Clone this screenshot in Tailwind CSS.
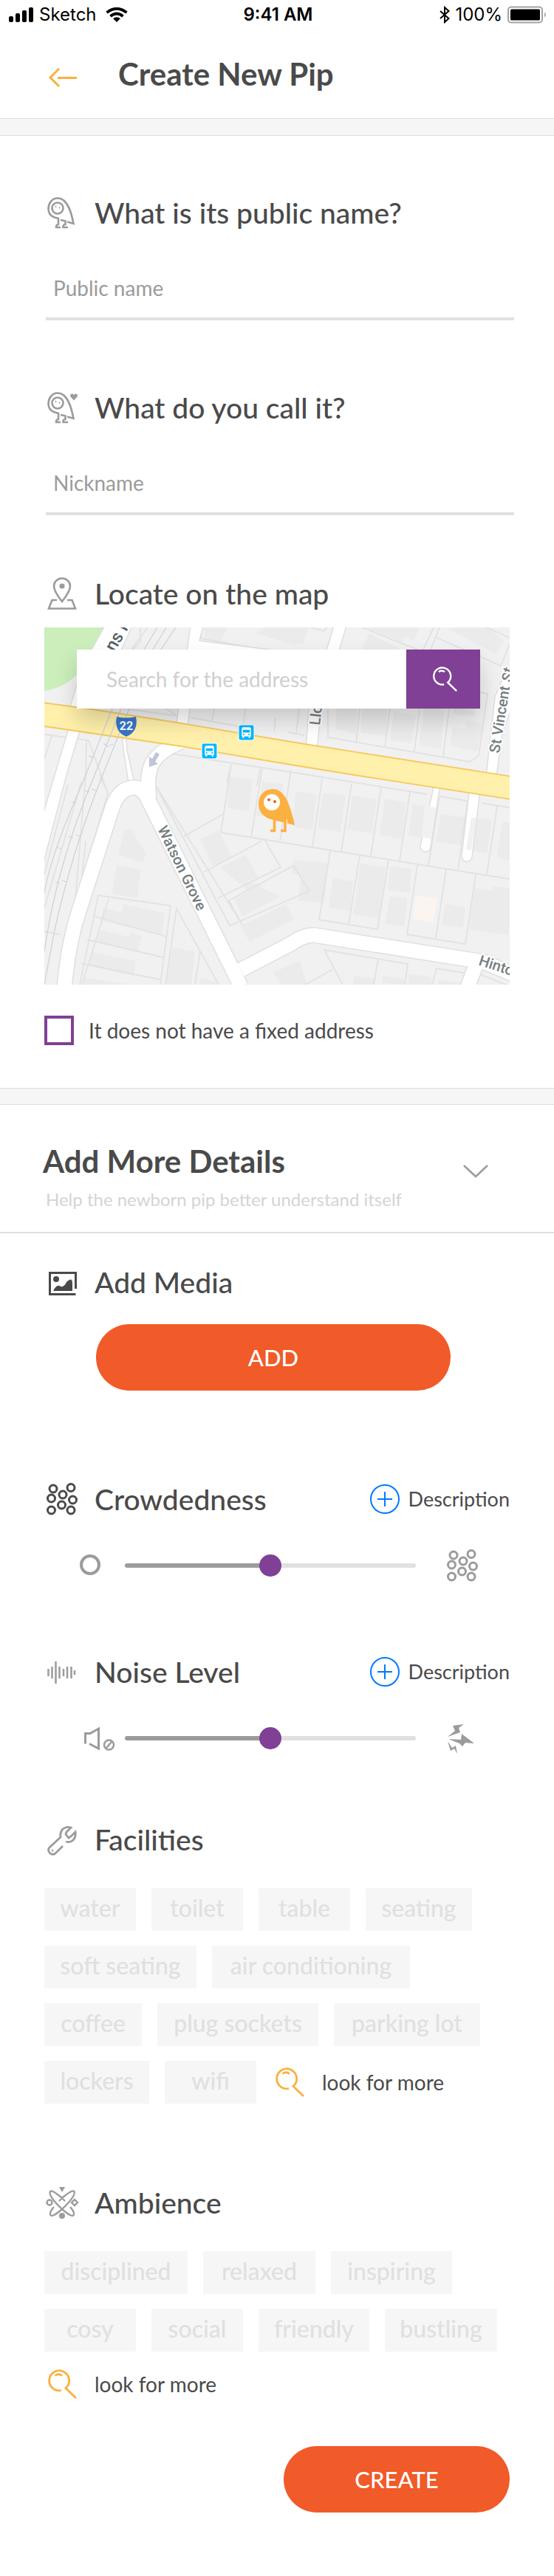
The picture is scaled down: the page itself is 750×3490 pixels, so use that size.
<!DOCTYPE html>
<html lang="en">
<head>
<meta charset="utf-8">
<meta name="viewport" content="width=device-width, initial-scale=1">
<title>Create New Pip</title>
<script src="https://cdn.jsdelivr.net/npm/@tailwindcss/browser@4"></script>
</head>
<body class="bg-white font-[Lato,'Open_Sans',sans-serif] text-[#4a4a4a]">

<!-- Shared icon shapes -->
<svg class="hidden" aria-hidden="true">
  <symbol id="pip" viewBox="0 0 48 44">
    <g fill="none" stroke="currentColor" stroke-width="2.600">
      <path d="M31 34.500L39.500 37C37 24 32 2.500 18 2.500C10 2.500 5.500 10 5.500 17C5.500 24 9.500 27 14 28.500L19 30V38Q16 38 16 42H22"/>
      <path d="M22 32L28.500 33.500V38Q25 38 25.500 42H32"/>
      <circle cx="18" cy="16" r="7.500"/>
    </g>
    <circle cx="15.500" cy="14" r="1" fill="currentColor"/><circle cx="20.500" cy="15.500" r="1" fill="currentColor"/>
  </symbol>
  <symbol id="crowd" viewBox="0 0 44 44">
    <g fill="none" stroke="currentColor" stroke-width="3">
      <circle cx="10" cy="8" r="5"/><circle cx="34" cy="6.500" r="5"/><circle cx="23" cy="16" r="5"/><circle cx="7.500" cy="21" r="5"/>
      <circle cx="36.500" cy="23" r="5"/><circle cx="21.500" cy="30" r="5"/><circle cx="7.500" cy="37" r="5"/><circle cx="34" cy="37" r="5"/>
    </g>
  </symbol>
  <symbol id="search" viewBox="0 0 40 40">
    <g fill="none" stroke="currentColor" stroke-width="2.800">
      <path d="M19 28.500A13.500 13.500 0 1 1 25 25.500L39 39"/>
      <path d="M10.500 8.500Q15 5 20 8.500"/>
    </g>
  </symbol>
  <symbol id="plus" viewBox="0 0 40 40">
    <g fill="none" stroke="currentColor" stroke-width="2"><circle cx="20" cy="20" r="19"/><path d="M20 10V30M10 20H30"/></g>
  </symbol>
  <symbol id="bus" viewBox="0 0 22 22">
    <rect x="0.500" y="0.500" width="21" height="21" rx="3" fill="#fff"/><rect x="1.500" y="1.500" width="19" height="19" rx="2" fill="#00b8ff"/>
    <path d="M5 6Q5 4 7 4H15Q17 4 17 6V16H16V18H14V16H8V18H6V16H5Z" fill="#fff"/>
    <path d="M6.500 7.500H15.500V11H6.500Z" fill="#00b8ff"/><circle cx="7.500" cy="13.500" r="1" fill="#00b8ff"/><circle cx="14.500" cy="13.500" r="1" fill="#00b8ff"/>
  </symbol>
</svg>

<div class="grid h-10 grid-cols-3 items-center pr-[9px] pl-3 font-[Inter,sans-serif] text-2xl leading-10 text-black">
  <div class="flex items-center gap-2">
    <svg class="h-5 w-[33px]" viewBox="0 0 33 20" aria-hidden="true"><rect y="12" width="6" height="8" rx="2"/><rect x="9" y="8" width="6" height="12" rx="2"/><rect x="18" y="4" width="6" height="16" rx="2"/><rect x="27" width="6" height="20" rx="2"/></svg>
    <span>Sketch</span>
    <svg class="ml-1 h-5 w-[30px]" viewBox="0 0 30 20" aria-hidden="true"><g fill="none" stroke="#000" stroke-width="3.800"><path d="M1.500 7Q15-3.500 28.500 7"/><path d="M6.500 12Q15 5 23.500 12"/></g><path d="M10 15Q15 11.500 20 15L15 20Z"/></svg>
  </div>
  <div class="text-center font-semibold">9:41 AM</div>
  <div class="flex items-center justify-end gap-[7px]">
    <svg class="h-6 w-[14px]" viewBox="0 0 14 24" fill="none" stroke="#000" stroke-width="2" aria-hidden="true"><path d="M1 7L12.500 17L7 22V2L12.500 7L1 17"/></svg>
    <span>100%</span>
    <svg class="h-6 w-[54px]" viewBox="0 0 54 24" aria-hidden="true"><rect x="1" y="1.500" width="46" height="21" rx="4" fill="#fff" stroke="#a3a3a3" stroke-width="2"/><rect x="4" y="4.500" width="40" height="15" rx="1.500"/><path d="M50 8.500Q54 12 50 15.500Z" fill="#a3a3a3"/></svg>
  </div>
</div>

<header class="flex h-[120px] items-center px-[60px]">
  <button type="button" aria-label="Back" class="text-[#fbb040]">
    <svg class="size-12" viewBox="0 0 48 48" fill="none" stroke="currentColor" stroke-width="3" aria-hidden="true"><path d="M20 17L8 29L20 41M18 29.500H44"/></svg>
  </button>
  <h1 class="ml-[52px] text-[42px] leading-[48px] font-bold">Create New Pip</h1>
</header>

<div class="h-6 border-y border-[#dedede] bg-[#f6f6f6]"></div>

<main>
  <section class="px-[60px] pt-[82px] pb-[58px]">
    <div class="flex h-11 items-center gap-5">
      <svg class="h-11 w-12 text-[#9b9b9b]" aria-hidden="true"><use href="#pip"/></svg>
      <label for="public" class="text-[39px] leading-11 font-medium">What is its public name?</label>
    </div>
    <input id="public" type="text" placeholder="Public name" class="mt-10 -mr-1.5 ml-0.5 block h-[84px] w-[calc(100%+4px)] border-b-4 border-[#e0e0e0] px-2.5 text-[28px] outline-none placeholder:text-[#9b9b9b]">

    <div class="mt-24 flex h-11 items-center gap-5">
      <svg class="h-11 w-12 text-[#9b9b9b]" viewBox="0 0 48 44" aria-hidden="true"><use href="#pip" width="48" height="44"/><path d="M40 12.500L35.500 7.500Q34 4 37.500 3.500Q39 3.500 40 5Q41 3.500 42.500 3.500Q46 4 44.500 7.500Z" fill="currentColor"/></svg>
      <label for="nick" class="text-[39px] leading-11 font-medium">What do you call it?</label>
    </div>
    <input id="nick" type="text" placeholder="Nickname" class="mt-10 -mr-1.5 ml-0.5 block h-[84px] w-[calc(100%+4px)] border-b-4 border-[#e0e0e0] px-2.5 text-[28px] outline-none placeholder:text-[#9b9b9b]">

    <div class="mt-[84px] flex h-11 items-center gap-5">
      <svg class="h-11 w-12 text-[#9b9b9b]" viewBox="0 0 48 44" aria-hidden="true"><g fill="none" stroke="currentColor" stroke-width="2.600"><path d="M24 33Q13 19 13 12A11 10.500 0 0 1 35 12Q35 19 24 33Z"/><path d="M17 31H10.500L6 42.500H42L37.500 31H31"/></g><circle cx="24" cy="12" r="3.600" fill="currentColor"/></svg>
      <h2 class="text-[39px] leading-11 font-medium">Locate on the map</h2>
    </div>

    <div class="relative mt-6 h-[484px] overflow-hidden">
      <svg class="size-full" viewBox="0 0 630 484" preserveAspectRatio="xMidYMid slice" role="img" aria-label="Map around Watson Grove">
        <rect width="630" height="484" fill="#f1f1f1"/>
        <path d="M0 0H82L63 32L44 64Q26 82 0 86Z" fill="#cbeebb"/>
        <!-- buildings -->
        <g fill="#ebebeb">
          <path d="M250 202L282 206L277 249L248 245ZM295 209L323 212L318 257L287 255ZM340 222L369 226L363 275L336 270ZM377 224L408 228L401 277L370 272ZM417 228L450 233L444 279L410 274ZM461 232L490 237L484 287L454 281ZM499 239L529 244L522 286L493 282ZM536 253L569 257L565 295L530 290ZM578 257L606 261L599 306L571 301ZM620 264H630V315L613 312Z"/>
          <path d="M337 315L384 319L379 373L344 370L347 335L335 334ZM391 340L418 344L414 384L385 380ZM428 320L462 325L453 395L418 389ZM468 324L497 327L495 360L465 356ZM468 364L491 367L488 405L462 402ZM543 374L570 379L567 407L538 403ZM582 353L607 357V351L630 353V405L628 417L575 409Z"/>
          <path d="M116 272L138 307L133 318L100 308L108 277ZM98 322L130 328L126 367L92 361ZM79 380L105 386L107 375L163 387L159 417L77 397ZM75 410L114 419L116 413L132 418L126 439L71 426ZM64 440L124 452L121 472L61 459ZM55 475L110 483V484H53ZM173 433L204 439L199 484H164ZM211 475L236 480V484H210Z"/>
          <path d="M211 287L236 275L254 311L228 323ZM238 325L273 308L290 339L274 344L296 350L303 352L292 351L319 365L268 392L257 368L277 358ZM266 404L327 375L338 395L278 426ZM311 467L345 452L356 484H320Z"/>
          <path d="M397 90L424 92L422 144L394 138ZM431 90L466 92L462 147L428 142ZM473 115L503 119L497 157L468 152ZM515 100L542 105L537 165L507 160ZM553 135L570 138L571 127L594 130L586 168L549 160ZM555 100L585 104L582 120L553 117Z"/>
          <path d="M215 0H248L238 22L218 16ZM298 0H340V25L287 8ZM330 0H358L350 22L330 20ZM434 0H508L500 18L488 12L484 20ZM546 2L560 0H600L622 18L612 36ZM440 8L480 28V30H430ZM420 472L447 476V484H418ZM458 482V472L487 476V484ZM494 470L523 473L525 484H493ZM534 478L570 482V484H533ZM330 460L343 455L356 484H330Z"/>
        </g>
        <path d="M503 363L532 367L527 400L498 395Z" fill="#fcf4ee"/>
        <!-- property boundaries -->
        <g fill="none" stroke="#e2e2e2" stroke-width="1.800">
          <path d="M0 145L60 153L86 225M57 153L56 200L33 478M10 147L0 178M165 170L340 197L518 226M536 229L572 235M592 238L630 244M253 185L239 278M295 190L280 285M334 193L319 290M376 205L363 298M416 211L402 304M456 216L442 310M495 223L481 316M535 229L520 323M573 236L560 329M613 242L599 335"/>
          <path d="M239 278L630 341M150 213L268 403L250 370L337 323L359 357L251 404ZM242 253L189 283M295 289L215 332M299 289L320 325L235 367M387 303L372 396L451 409L466 315M427 309L412 402M505 322L491 416L570 429L584 335M544 328L530 421"/>
          <path d="M51 484L87 368M48 484L73 363L171 377L157 484M66 391L165 419M58 423L161 447M50 455L156 477M164 484L179 381L236 484M211 438L204 484M0 412L22 416M32 213L0 335M50 210L0 380M36 480L56 290"/>
          <path d="M404 484L379 437L492 456L488 484M452 449L446 484M391 463L350 486M525 484L531 462L573 469M590 470L630 486"/>
          <path d="M213 0L212 15L340 38M130 90L178 118M198 122L263 134M65 104L180 120M230 110L227 127M272 110L269 135M313 122L311 142M384 110V149L576 182L588 174L600 90L580 86M427 110L422 157M468 110L461 162M508 110L501 168M548 110L540 175M345 110L341 143M330 142L352 146"/>
          <path d="M430 0L515 34M527 0L512 32M535 0L523 30M529 13L618 52L630 22M598 0L630 14M118 30L140 0M130 0V20L120 30M360 0L378 5L383 0"/>
          <path d="M253 187L247 210M292 192L288 215M75 200L86 225L48 350"/>
        </g>
        <!-- roads -->
        <g fill="#fff" stroke="#dfdfdf" stroke-width="1.500">
          <path d="M82-2L63 32L44 77L32 118H64L119-2ZM35 130L11 210L-2 254V322L30 200L50 134Z"/>
          <path d="M198-2L178 135L194 138L204 40L400 70V42L210 18L215-2ZM392-2L358 110L354 165H369L375 110L409-2ZM640 50L622 66L610 94L598 202H612L620 143L636 100Z"/>
          <path d="M529 208L509 296A7 7 0 0 0 523 298L536 212ZM576 216L565 309A7 7 0 0 0 579 311L590 220Z"/>
          <path d="M105 140L107 165L114 210L122 210L112 167L110 142Z"/>
        </g>
        <g fill="none" stroke-linejoin="round">
          <path d="M27 490Q32 430 46 387L93 241Q103 217 122 217Q134 218 140 232L266 486M142 232Q138 200 146 184Q156 167 185 155M266 464L335 428Q352 416 366 417L594 453L640 472M586 453L572 490" stroke="#dfdfdf" stroke-width="22"/>
          <path d="M27 490Q32 430 46 387L93 241Q103 217 122 217Q134 218 140 232L266 486M142 232Q138 200 146 184Q156 167 185 155M266 464L335 428Q352 416 366 417L594 453L640 472M586 453L572 490" stroke="#fff" stroke-width="19"/>
        </g>
        <path d="M-2 102L65 111L180 129L340 156L632 202V233L420 200L340 187L185 161L0 134H-2Z" fill="#fff0ab" stroke="#f5c95f" stroke-width="1.800"/>
        <path d="M515 241L530 244L524 287L511 284ZM578 257L585 258L578 302L571 301Z" fill="#f1f1ef"/>
        <!-- railway -->
        <g fill="none" stroke="#cfd2d5" stroke-width="1.300"><path d="M153 0L135 30M165 0L147 30M178 0L158 30M92 110L52 210Q8 310 0 360M104 110L64 210Q15 330 0 440M115 110L75 210Q36 310 14 410L0 484M80 157L87 162M88 160L94 158M60 174L67 177M37 236L43 238M55 221L61 223M64 219L70 221M17 298L23 300M33 283L39 285M43 281L49 283M15 345L21 347M24 343L30 345"/></g>
        <path d="M151 169L156 172L150 182L154 185L142 189V175L146 178Z" fill="#bfc5da"/>
        <!-- labels -->
        <g class="font-[Roboto,sans-serif] text-xl font-medium" fill="#747d80" stroke="#fff" stroke-width="4" stroke-linejoin="round" paint-order="stroke">
          <text transform="translate(153 273) rotate(64)">Watson Grove</text>
          <text transform="translate(616 171) rotate(-81)">St Vincent <tspan rotate="12">St</tspan></text>
          <text transform="translate(373 133) rotate(-84)">Llo</text>
          <text transform="translate(587 457) rotate(18)">Hinto</text>
          <text transform="translate(95 34) rotate(-60)" class="text-2xl" fill="#566368">ns R</text>
        </g>
        <path d="M98 121Q111 124 124 121Q128 141 111 148Q94 141 98 121Z" fill="#3676c8"/>
        <text x="111" y="139" text-anchor="middle" fill="#fff" class="font-[Roboto,sans-serif] text-base font-bold">22</text>
        <use href="#bus" x="262" y="131" width="23" height="23"/><use href="#bus" x="212" y="156" width="23" height="23"/>
        <!-- pip marker -->
        <path d="M339 268Q336 252 329 235C323 223 317 219 309 219A19 19 0 0 0 290 239C290 249 296 257 307 260Z" fill="#fbb040"/>
        <path d="M325 260V275M328.500 260V267" fill="none" stroke="#fff0cf" stroke-width="1"/>
        <path d="M311.500 258V275.500H306M326 259V275.500H320" fill="none" stroke="#fbb040" stroke-width="3.500"/>
        <circle cx="308" cy="237" r="11" fill="#fff"/><circle cx="304" cy="233.500" r="2" fill="#f15a29"/><circle cx="312" cy="236" r="2" fill="#f15a29"/>
      </svg>
      <form class="absolute inset-x-10 top-[30px] ml-1 flex h-20 shadow-[0_16px_30px_rgba(0,0,0,0.17)]">
        <input type="search" aria-label="Address" placeholder="Search for the address" class="min-w-0 flex-1 bg-white px-10 text-[28px] outline-none placeholder:text-[#cfcfcf]">
        <button type="button" aria-label="Search" class="flex w-[100px] items-center justify-center bg-[#7f4095] text-white"><svg class="ml-1 size-[34px]" aria-hidden="true"><use href="#search"/></svg></button>
      </form>
    </div>

    <label class="mt-[42px] flex h-10 items-center gap-5 text-[28px]">
      <input type="checkbox" class="size-10 appearance-none border-4 border-[#7f4095] bg-white checked:bg-[#7f4095]">
      It does not have a fixed address
    </label>
  </section>

  <div class="h-[23px] border-y border-[#dedede] bg-[#f6f6f6]"></div>

  <section class="flex items-center justify-between border-b-2 border-[#dedede] pt-[52px] pr-[84px] pb-7 pl-[58px]">
    <div>
      <h2 class="text-[42px] leading-[48px] font-bold">Add More Details</h2>
      <p class="mt-3 pl-1 text-2xl leading-8 text-[#d4d4d4]">Help the newborn pip better understand itself</p>
    </div>
    <button type="button" aria-label="Toggle details" class="-mt-4 text-[#9b9b9b]"><svg class="h-6 w-11" viewBox="0 0 44 24" fill="none" stroke="currentColor" stroke-width="2.500" aria-hidden="true"><path d="M6 4L22 19L38 4"/></svg></button>
  </section>

  <section class="px-[60px] pt-11 pb-[85px]">
    <div class="flex h-11 items-center gap-5">
      <svg class="h-11 w-12" viewBox="0 0 48 44" aria-hidden="true"><path d="M42.500 31V9.500H7.500V38.500H42.500" fill="none" stroke="currentColor" stroke-width="3"/><circle cx="16" cy="18" r="4" fill="currentColor"/><path d="M12 34Q17 24 22 28Q27 29 30 22Q38 14 38 24V34Z" fill="currentColor"/></svg>
      <h2 class="text-[39px] leading-11 font-medium">Add Media</h2>
    </div>
    <button type="button" class="mt-[35px] mr-20 ml-[70px] block h-[90px] w-[calc(100%-150px)] rounded-full bg-[#f15a29] text-[31px] font-medium text-white">ADD</button>

    <div class="mt-[125px] flex h-11 items-center gap-5">
      <svg class="h-11 w-12" aria-hidden="true"><use href="#crowd"/></svg>
      <h2 id="crowded" class="text-[39px] leading-11 font-medium">Crowdedness</h2>
      <button type="button" class="ml-auto flex items-center gap-3 text-[27px]"><svg class="size-10 text-[#007aff]" aria-hidden="true"><use href="#plus"/></svg>Description</button>
    </div>
    <div class="mt-[46px] flex h-11 items-center pr-[42px] pl-12 text-[#9b9b9b]">
      <svg class="h-11 w-12" viewBox="0 0 48 44" aria-hidden="true"><circle cx="14" cy="21" r="12" fill="none" stroke="currentColor" stroke-width="4"/></svg>
      <input type="range" value="50" aria-labelledby="crowded" class="mr-[41px] ml-[13px] h-1.5 min-w-0 flex-1 appearance-none rounded-full bg-[linear-gradient(90deg,#9b9b9b_50%,#e0e0e0_50%)] [&::-webkit-slider-thumb]:size-[30px] [&::-webkit-slider-thumb]:appearance-none [&::-webkit-slider-thumb]:rounded-full [&::-webkit-slider-thumb]:bg-[#7f4095]">
      <svg class="size-11" aria-hidden="true"><use href="#crowd"/></svg>
    </div>

    <div class="mt-[100px] flex h-11 items-center gap-5">
      <svg class="h-11 w-12 text-[#9b9b9b]" viewBox="0 0 48 44" fill="none" stroke="currentColor" stroke-width="2.500" aria-hidden="true"><path d="M5.500 18V28M10.500 15V31M15.500 8V38M20.500 15V31M26 18V28M31 15V31M36.500 15V31M41 20V26"/></svg>
      <h2 id="noise" class="text-[39px] leading-11 font-medium">Noise Level</h2>
      <button type="button" class="ml-auto flex items-center gap-3 text-[27px]"><svg class="size-10 text-[#007aff]" aria-hidden="true"><use href="#plus"/></svg>Description</button>
    </div>
    <div class="mt-[46px] flex h-11 items-center pr-[42px] pl-12 text-[#9b9b9b]">
      <svg class="h-11 w-12" viewBox="0 0 48 44" fill="none" stroke="currentColor" stroke-width="3" aria-hidden="true"><path d="M7.500 29.500V15.500H14L25.500 9V36L13 29.500"/><circle cx="39.500" cy="31" r="6.500" stroke-width="2.500"/><path d="M36 35L43 27" stroke-width="2.500"/></svg>
      <input type="range" value="50" aria-labelledby="noise" class="mr-[41px] ml-[13px] h-1.5 min-w-0 flex-1 appearance-none rounded-full bg-[linear-gradient(90deg,#9b9b9b_50%,#e0e0e0_50%)] [&::-webkit-slider-thumb]:size-[30px] [&::-webkit-slider-thumb]:appearance-none [&::-webkit-slider-thumb]:rounded-full [&::-webkit-slider-thumb]:bg-[#7f4095]">
      <svg class="size-11" viewBox="0 0 44 44" fill="currentColor" aria-hidden="true"><path d="M9 5L24 3L17 8L19 14L2 20L12 12ZM3 23L20 24L21 16L38 29L26 28L22 33L18 29ZM2 26L8 35L13 32L15 43L11 36L6 39Z"/></svg>
    </div>

    <div class="mt-[93px] flex h-11 items-center gap-5">
      <svg class="h-11 w-12 text-[#9b9b9b]" viewBox="0 0 48 44" fill="none" stroke="currentColor" stroke-width="2.800" aria-hidden="true"><path d="M25 31L15 41Q10 44 7 40Q4 36 7 33L22 19Q21 12 25 8Q30 4 36 6L30 12L29 15L33 20L37 17L42 12Q43 19 39 23Q35 27 29 25"/><circle cx="11" cy="37" r="0.500" stroke-width="2"/></svg>
      <h2 class="text-[39px] leading-11 font-medium">Facilities</h2>
    </div>
    <div class="mt-11 flex flex-wrap gap-x-[21px] gap-y-5 text-[32px] leading-[54px] font-medium text-[#e0e0e0]">
      <button type="button" class="h-[58px] w-[124px] bg-[#f6f6f6] pb-1">water</button>
      <button type="button" class="h-[58px] w-[124px] bg-[#f6f6f6] pb-1">toilet</button>
      <button type="button" class="h-[58px] w-[124px] bg-[#f6f6f6] pb-1">table</button>
      <button type="button" class="h-[58px] w-[144px] bg-[#f6f6f6] pb-1">seating</button>
      <button type="button" class="h-[58px] w-[206px] bg-[#f6f6f6] pb-1">soft seating</button>
      <button type="button" class="h-[58px] w-[268px] bg-[#f6f6f6] pb-1">air conditioning</button>
      <button type="button" class="h-[58px] w-[132px] bg-[#f6f6f6] pb-1">coffee</button>
      <button type="button" class="h-[58px] w-[218px] bg-[#f6f6f6] pb-1">plug sockets</button>
      <button type="button" class="h-[58px] w-[198px] bg-[#f6f6f6] pb-1">parking lot</button>
      <button type="button" class="h-[58px] w-[142px] bg-[#f6f6f6] pb-1">lockers</button>
      <button type="button" class="h-[58px] w-[124px] bg-[#f6f6f6] pb-1">wifi</button>
      <a href="#" class="ml-1 flex h-[58px] items-center gap-6 text-[28px] font-normal text-[#4a4a4a]"><svg class="size-10 text-[#fbb040]" aria-hidden="true"><use href="#search"/></svg>look for more</a>
    </div>

    <div class="mt-28 flex h-11 items-center gap-5">
      <svg class="h-11 w-12 text-[#9b9b9b]" viewBox="0 0 48 44" fill="none" stroke="currentColor" stroke-width="2.400" aria-hidden="true">
        <path d="M28 20L21 13M24 16Q38 4 40.500 7Q43 13 24 31Q9 44 8 38Q7 35 13 28M20 20L27 13M24 16Q10 4 8 7Q5 13 24 31Q39 44 40 38Q41 35 35 28"/>
        <circle cx="7" cy="22" r="3.500"/><path d="M41 18L45 22L41 26L37 22Z"/>
        <path d="M20 1H28L24 8Z" fill="currentColor" stroke="none"/><circle cx="24" cy="40" r="4" fill="currentColor" stroke="none"/>
      </svg>
      <h2 class="text-[39px] leading-11 font-medium">Ambience</h2>
    </div>
    <div class="mt-11 flex flex-wrap gap-x-[21px] gap-y-5 text-[32px] leading-[54px] font-medium text-[#e0e0e0]">
      <button type="button" class="h-[58px] w-[194px] bg-[#f6f6f6] pb-1">disciplined</button>
      <button type="button" class="h-[58px] w-[152px] bg-[#f6f6f6] pb-1">relaxed</button>
      <button type="button" class="h-[58px] w-[164px] bg-[#f6f6f6] pb-1">inspiring</button>
      <button type="button" class="h-[58px] w-[124px] bg-[#f6f6f6] pb-1">cosy</button>
      <button type="button" class="h-[58px] w-[124px] bg-[#f6f6f6] pb-1">social</button>
      <button type="button" class="h-[58px] w-[150px] bg-[#f6f6f6] pb-1">friendly</button>
      <button type="button" class="h-[58px] w-[152px] bg-[#f6f6f6] pb-1">bustling</button>
    </div>
    <a href="#" class="mt-6 ml-1 flex h-10 w-fit items-center gap-6 text-[28px]"><svg class="size-10 text-[#fbb040]" aria-hidden="true"><use href="#search"/></svg>look for more</a>
    <button type="submit" class="mt-16 ml-auto block h-[90px] w-[306px] rounded-full bg-[#f15a29] text-[31px] font-medium text-white">CREATE</button>
  </section>
</main>
</body>
</html>
